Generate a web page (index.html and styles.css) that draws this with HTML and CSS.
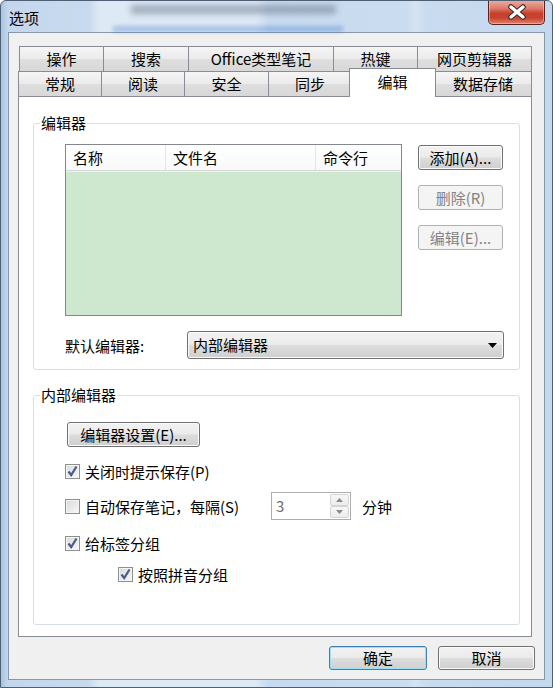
FILE: index.html
```html
<!DOCTYPE html>
<html>
  <head>
    <meta charset="utf-8" />
    <link rel="stylesheet" href="styles.css">
  </head>
  <body>
    <div class="window">
      <div class="titlebar">
        <span class="haze haze1"></span>
        <span class="haze haze2"></span>
        <span class="title">选项</span>
        <div class="close">
          <svg width="24" height="16" viewBox="0 0 24 16">
            <path d="M6 3 L18 13 M18 3 L6 13" stroke="#3d2a28" stroke-width="5.5" stroke-linecap="round" />
            <path d="M6 3 L18 13 M18 3 L6 13" stroke="#ffffff" stroke-width="3.4" stroke-linecap="round" />
          </svg>
        </div>
      </div>

      <div class="client">
        <div class="tabrow row1">
          <div class="tab w84">操作</div>
          <div class="tab w85">搜索</div>
          <div class="tab w145">Office类型笔记</div>
          <div class="tab w84">热键</div>
          <div class="tab w115 last">网页剪辑器</div>
        </div>
        <div class="tabrow row2">
          <div class="tab w83">常规</div>
          <div class="tab w83">阅读</div>
          <div class="tab w84">安全</div>
          <div class="tab w83">同步</div>
          <div class="tab current">编辑</div>
          <div class="tab w98 last">数据存储</div>
        </div>

        <div class="panel">
          <fieldset class="group">
            <legend>编辑器</legend>
            <div class="gbody gbody1">
              <div class="listrow">
                <div class="list">
                  <div class="listhead">
                    <div class="col c1">名称</div>
                    <div class="col c2">文件名</div>
                    <div class="col c3">命令行</div>
                  </div>
                </div>
                <div class="sidebtns">
                  <div class="btn">添加(A)...</div>
                  <div class="btn disabled">删除(R)</div>
                  <div class="btn disabled">编辑(E)...</div>
                </div>
              </div>
              <div class="selrow">
                <span class="sellabel">默认编辑器:</span>
                <div class="combo">
                  <span>内部编辑器</span>
                  <svg class="arrow" width="9" height="5" viewBox="0 0 9 5"><path d="M0 0 L9 0 L4.5 5 Z" fill="#000" /></svg>
                </div>
              </div>
            </div>
          </fieldset>

          <fieldset class="group group2">
            <legend>内部编辑器</legend>
            <div class="gbody gbody2">
              <div class="btn wide">编辑器设置(E)...</div>
              <div class="check c-first">
                <span class="box on">
                  <svg width="13" height="13" viewBox="0 0 13 13"><path d="M2.5 6.5 L5.2 10 L10.5 1.5" fill="none" stroke="#4a5b8c" stroke-width="2.2" /></svg>
                </span>
                <span>关闭时提示保存(P)</span>
              </div>
              <div class="check c-spin">
                <span class="box"></span>
                <span class="spinlabel">自动保存笔记，每隔(S)</span>
                <div class="spin">
                  <span class="spinval">3</span>
                  <div class="spinbtns">
                    <div class="sb"><svg width="7" height="4" viewBox="0 0 7 4"><path d="M0 4 L7 4 L3.5 0 Z" fill="#8a8a8a" /></svg></div>
                    <div class="sb"><svg width="7" height="4" viewBox="0 0 7 4"><path d="M0 0 L7 0 L3.5 4 Z" fill="#8a8a8a" /></svg></div>
                  </div>
                </div>
                <span class="unit">分钟</span>
              </div>
              <div class="check c-third">
                <span class="box on">
                  <svg width="13" height="13" viewBox="0 0 13 13"><path d="M2.5 6.5 L5.2 10 L10.5 1.5" fill="none" stroke="#4a5b8c" stroke-width="2.2" /></svg>
                </span>
                <span>给标签分组</span>
              </div>
              <div class="check c-fourth">
                <span class="box on">
                  <svg width="13" height="13" viewBox="0 0 13 13"><path d="M2.5 6.5 L5.2 10 L10.5 1.5" fill="none" stroke="#4a5b8c" stroke-width="2.2" /></svg>
                </span>
                <span>按照拼音分组</span>
              </div>
            </div>
          </fieldset>
        </div>

        <div class="footer">
          <div class="btn dlg default">确定</div>
          <div class="btn dlg">取消</div>
        </div>
      </div>
    </div>
  </body>
</html>
```

FILE: styles.css
```css
* {
  box-sizing: border-box;
}

body {
  margin: 0;
  font-family: "Noto Sans CJK SC", "Liberation Sans", sans-serif;
  font-size: 15px;
  color: #000;
}

.window {
  position: relative;
  width: 553px;
  height: 688px;
  border: 1px solid #4f5f73;
  border-radius: 6px 6px 0 0;
  background: linear-gradient(90deg, #a9c3e2 0, #c4d7ed 7px, #c8daee 88px, #dde9f5 98px, #dde9f5 255px, #c7daef 268px, #cadcf0 405px, #d6e4f3 415px, #c9dbef 425px, #c4d8ee 100%);
  display: flex;
  flex-direction: column;
  overflow: hidden;
}

/* title bar */
.titlebar {
  position: relative;
  height: 31px;
  padding: 6px 0 0 8px;
  flex: none;
}

.title {
  position: relative;
  line-height: 20px;
  color: #000;
}

.haze {
  position: absolute;
  display: block;
}

.haze1 {
  left: 130px;
  top: 4px;
  width: 205px;
  height: 9px;
  background: #5b6678;
  filter: blur(3px);
  opacity: 0.45;
}

.haze2 {
  left: 112px;
  top: 25px;
  width: 230px;
  height: 6px;
  background: #3f7acb;
  filter: blur(2px);
  opacity: 0.35;
}

.close {
  position: absolute;
  top: -1px;
  right: 7px;
  width: 57px;
  height: 25px;
  border: 1px solid #5b2219;
  border-top: none;
  border-radius: 0 0 5px 5px;
  background: linear-gradient(#eab0a4 0, #dc7b6a 35%, #c7402c 55%, #c8432f 75%, #e0846f 100%);
  box-shadow: inset 0 0 0 1px rgba(255, 210, 200, 0.5);
  display: flex;
  align-items: center;
  justify-content: center;
}

/* client area */
.client {
  flex: 1;
  margin: 0 7px 7px 7px;
  border: 1px solid #8797ab;
  background: #f0f0f0;
  padding: 13px 12px 0 9px;
}

.tabrow {
  display: flex;
  height: 25px;
}

.row1 {
  padding-left: 1px;
}

.tab {
  flex: none;
  height: 25px;
  border-top: 1px solid #898c95;
  border-left: 1px solid #898c95;
  background: linear-gradient(#f5f5f5, #ebebeb 48%, #dedede 52%, #d8d8d8);
  text-align: center;
  line-height: 24px;
}

.tab.last {
  border-right: 1px solid #898c95;
}

.w83 { width: 83px; }
.w84 { width: 84px; }
.w85 { width: 85px; }
.w98 { width: 98px; }
.w115 { width: 115px; }
.w145 { width: 145px; }

.tab.current {
  position: relative;
  z-index: 2;
  width: 87px;
  height: 29px;
  margin: -3px -2px 0 -2px;
  border-right: 1px solid #898c95;
  background: #fff;
  line-height: 25px;
}

.panel {
  height: 541px;
  border: 1px solid #898c95;
  background: #fff;
  padding: 0 11px 0 14px;
}

/* group boxes */
.group {
  margin: 16px 0 0 0;
  padding: 0;
  min-width: 0;
  border: 1px solid #d5dfe5;
  border-radius: 3px;
}

.group2 {
  margin-top: 15px;
}

legend {
  margin-left: 6px;
  padding: 0 1px;
  line-height: 20px;
}

.gbody1 {
  padding: 11px 0 10px 31px;
}

.gbody2 {
  padding: 17px 0 40px 31px;
}

.listrow {
  display: flex;
}

.list {
  width: 337px;
  height: 172px;
  border: 1px solid #828790;
  background: #cde8cf;
}

.listhead {
  display: flex;
  height: 26px;
  background: linear-gradient(#ffffff, #f8f9fa);
  border-bottom: 1px solid #d5d5d5;
  box-shadow: 0 1px 0 #eef6ee;
}

.col {
  padding-left: 7px;
  line-height: 26px;
  border-right: 1px solid #e5e5e5;
}

.c1 { width: 100px; }
.c2 { width: 150px; }
.c3 { flex: 1; border-right: none; }

.sidebtns {
  display: flex;
  flex-direction: column;
  gap: 15px;
  margin-left: 16px;
  padding-top: 1px;
}

/* buttons */
.btn {
  width: 85px;
  height: 25px;
  border: 1px solid #707070;
  border-radius: 3px;
  background: linear-gradient(#f2f2f2, #ebebeb 48%, #dddddd 52%, #cfcfcf);
  box-shadow: inset 0 0 0 1px #fbfbfb;
  text-align: center;
  line-height: 23px;
}

.btn.disabled {
  border-color: #adb2b5;
  background: #f4f4f4;
  box-shadow: none;
  color: #838383;
}

.btn.wide {
  width: 133px;
  margin-left: 2px;
}

.selrow {
  display: flex;
  align-items: center;
  margin-top: 15px;
}

.sellabel {
  width: 122px;
}

.combo {
  position: relative;
  width: 317px;
  height: 28px;
  border: 1px solid #707070;
  border-radius: 3px;
  background: linear-gradient(#f2f2f2, #ebebeb 48%, #dddddd 52%, #cfcfcf);
  box-shadow: inset 0 0 0 1px #fbfbfb;
  padding-left: 5px;
  line-height: 26px;
  display: flex;
  align-items: center;
  justify-content: space-between;
  padding-right: 6px;
}

/* check boxes */
.check {
  display: flex;
  align-items: center;
  height: 20px;
}

.c-first { margin-top: 14px; }
.c-spin { margin-top: 11px; height: 28px; }
.c-third { margin-top: 13px; }
.c-fourth { margin-top: 11px; padding-left: 53px; }

.box {
  width: 15px;
  height: 15px;
  margin-right: 5px;
  border: 1px solid #8e8f8f;
  background: linear-gradient(135deg, #d9d9d9, #f8f8f8);
  box-shadow: inset 0 0 0 1px #f4f4f4;
  display: flex;
  align-items: center;
  justify-content: center;
  flex: none;
}

.spinlabel {
  width: 186px;
}

.spin {
  width: 80px;
  height: 28px;
  border: 1px solid #abadb3;
  display: flex;
  justify-content: space-between;
  padding: 1px 1px 1px 4px;
}

.spinval {
  color: #6d6d6d;
  line-height: 24px;
}

.spinbtns {
  width: 19px;
  display: flex;
  flex-direction: column;
}

.sb {
  flex: 1;
  border: 1px solid #d4d4d4;
  border-radius: 2px;
  background: linear-gradient(#f7f7f7, #ececec);
  display: flex;
  align-items: center;
  justify-content: center;
}

.unit {
  margin-left: 11px;
}

/* dialog buttons */
.footer {
  display: flex;
  justify-content: flex-end;
  gap: 11px;
  margin-right: -3px;
  padding-top: 9px;
}

.btn.dlg {
  width: 97px;
  height: 24px;
  line-height: 22px;
}

.btn.default {
  width: 98px;
  border-color: #3c7fb1;
  box-shadow: inset 0 0 0 1px #9fe0f7;
}
```
